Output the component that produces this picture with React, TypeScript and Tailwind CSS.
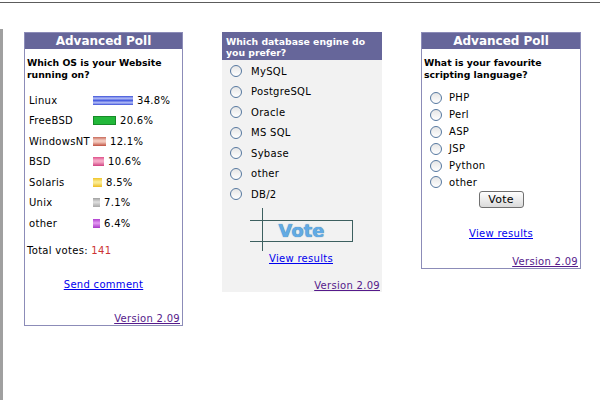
import React from 'react';

const osRows = [
  { name: 'Linux', pct: '34.8%', bar: 'w-[40px] bg-[linear-gradient(to_bottom,#3a4fd8_0%,#b4bef6_25%,#4a5fe0_50%,#b4bef6_75%,#3a4fd8_100%)]' },
  { name: 'FreeBSD', pct: '20.6%', bar: 'w-[23px] bg-[#22b83a] border border-[#178a28]' },
  { name: 'WindowsNT', pct: '12.1%', bar: 'w-[13px] bg-[linear-gradient(to_bottom,#c86a5a_0%,#f2c8bc_35%,#f2c8bc_55%,#c05040_100%)]' },
  { name: 'BSD', pct: '10.6%', bar: 'w-[11px] bg-[linear-gradient(to_bottom,#e0508a_0%,#f4a8c6_35%,#f4a8c6_55%,#d04080_100%)]' },
  { name: 'Solaris', pct: '8.5%', bar: 'w-[9px] bg-[linear-gradient(to_bottom,#f0c428_0%,#faea90_40%,#faea90_55%,#eebc20_100%)]' },
  { name: 'Unix', pct: '7.1%', bar: 'w-[7px] bg-[linear-gradient(to_bottom,#a0a0a0_0%,#e0e0e0_45%,#a8a8a8_100%)]' },
  { name: 'other', pct: '6.4%', bar: 'w-[7px] bg-[linear-gradient(to_bottom,#b040d0_0%,#e49cf2_45%,#a838c8_100%)]' },
];

const dbOptions = ['MySQL', 'PostgreSQL', 'Oracle', 'MS SQL', 'Sybase', 'other', 'DB/2'];
const langOptions = ['PHP', 'Perl', 'ASP', 'JSP', 'Python', 'other'];

function Radio({ name }: { name: string }) {
  return (
    <input
      type="radio"
      name={name}
      className="appearance-none w-[12px] h-[12px] shrink-0 rounded-full border border-[#56789f] bg-[linear-gradient(to_bottom,#e6e6e6,#ffffff)]"
    />
  );
}

function Version() {
  return (
    <div className="mt-auto text-right leading-[12px]">
      <a href="#" className="text-[#551a8b] underline">Version 2.09</a>
    </div>
  );
}

export default function App() {
  return (
    <div className="w-[600px] h-[400px] bg-white overflow-hidden text-black text-[10px] tracking-[0.3px] font-['DejaVu_Sans',Verdana,sans-serif]">
      <div className="h-[2px]" />
      <div className="h-px bg-[#5c5c5c]" />
      <div className="flex items-start h-[397px]">
        <div className="w-[3px] mt-[26px] self-stretch bg-[#a0a0a0]" />

        {/* results poll */}
        <div className="ml-[21px] mt-[29px] w-[159px] h-[294px] flex flex-col border border-[#8c8cb8]">
          <div className="h-[16px] bg-[#66669a] text-white text-[12px] font-bold tracking-normal leading-[16px] text-center">
            Advanced Poll
          </div>
          <div className="flex-1 flex flex-col px-[2px]">
            <div className="mt-[8px] text-[9.3px] leading-[12px] font-bold tracking-normal">
              Which OS is your Website running on?
            </div>
            <div className="mt-[9px]">
              {osRows.map((r) => (
                <div key={r.name} className="h-[20.5px] flex items-center pl-[2px]">
                  <span className="w-[64px]">{r.name}</span>
                  <span className={`h-[9px] ${r.bar}`} />
                  <span className="ml-[4px]">{r.pct}</span>
                </div>
              ))}
            </div>
            <div className="mt-[11px] leading-[12px]">
              Total votes: <span className="text-[#cc3333]">141</span>
            </div>
            <div className="mt-[22px] text-center leading-[12px]">
              <a href="#" className="text-[#0000ee] underline">Send comment</a>
            </div>
            <Version />
          </div>
        </div>

        {/* database poll */}
        <div className="ml-[39px] mt-[29px] w-[160px] flex flex-col">
          <div className="h-[28px] bg-[#66669a] text-white text-[9.3px] font-bold tracking-normal leading-[11px] px-[4px] pt-[4px]">
            Which database engine do you prefer?
          </div>
          <div className="h-[232px] bg-[#f2f2f2] flex flex-col pt-[1px] pr-[2px]">
            {dbOptions.map((o) => (
              <label key={o} className="h-[20.5px] flex items-center pl-[8px]">
                <Radio name="db" />
                <span className="ml-[9px]">{o}</span>
              </label>
            ))}
            <div className="relative mx-auto mt-[3px] w-[103px] h-[43px]">
              <div className="mt-[12px] h-[22px] border-y border-r border-[#3d6060] flex items-center justify-center pl-[2px]">
                <span className="text-[18px] font-bold tracking-normal leading-none text-[#62aae4] [text-shadow:0_0_1px_#2f6f9f]">Vote</span>
              </div>
              <div className="absolute left-[12px] top-0 bottom-0 w-px bg-[#3d6060]" />
            </div>
            <div className="mt-[2px] text-center leading-[12px]">
              <a href="#" className="text-[#0000ee] underline">View results</a>
            </div>
            <Version />
          </div>
        </div>

        {/* language poll */}
        <div className="ml-[39px] mt-[29px] w-[160px] h-[237px] flex flex-col border border-[#8c8cb8]">
          <div className="h-[16px] bg-[#66669a] text-white text-[12px] font-bold tracking-normal leading-[16px] text-center">
            Advanced Poll
          </div>
          <div className="flex-1 flex flex-col px-[2px]">
            <div className="mt-[8px] text-[9.3px] leading-[12px] font-bold tracking-normal">
              What is your favourite scripting language?
            </div>
            <div className="mt-[8.5px]">
              {langOptions.map((o) => (
                <label key={o} className="h-[16.9px] flex items-center pl-[6px]">
                  <Radio name="lang" />
                  <span className="ml-[7px]">{o}</span>
                </label>
              ))}
            </div>
            <button className="mx-auto w-[45px] h-[17px] border border-[#707070] rounded-[3px] bg-[linear-gradient(to_bottom,#ffffff,#dadada)] text-[11px] leading-none text-black">
              Vote
            </button>
            <div className="mt-[20px] text-center leading-[12px]">
              <a href="#" className="text-[#0000ee] underline">View results</a>
            </div>
            <Version />
          </div>
        </div>
      </div>
    </div>
  );
}
